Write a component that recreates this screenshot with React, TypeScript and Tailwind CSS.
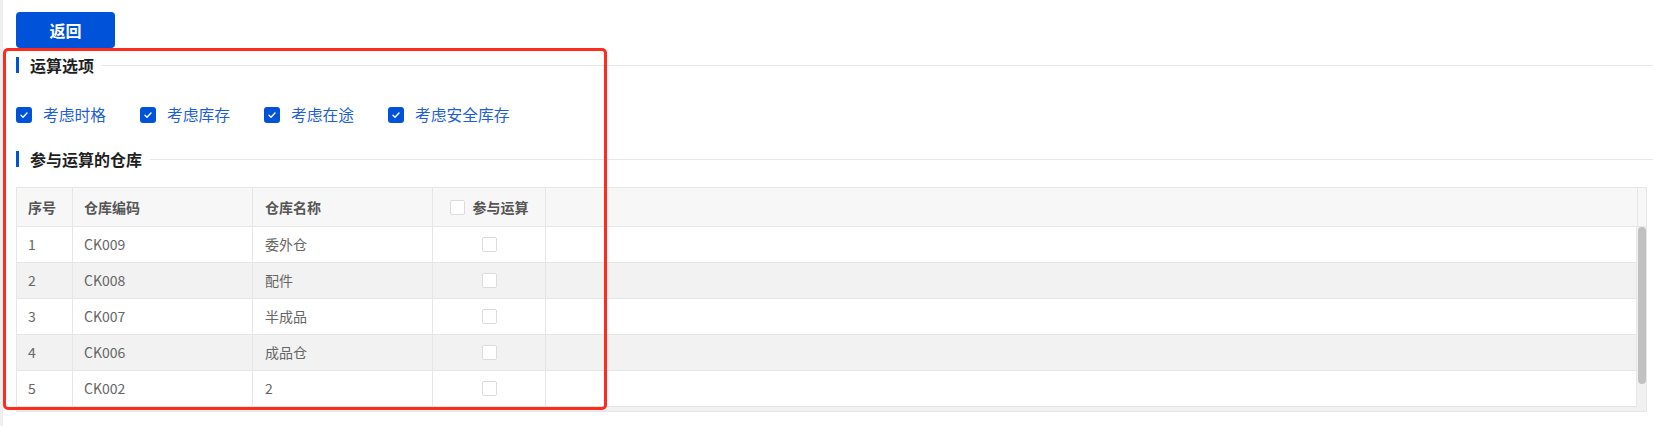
import React, { useState } from 'react';

interface Warehouse {
  no: number;
  code: string;
  name: string;
}

const warehouses: Warehouse[] = [
  { no: 1, code: 'CK009', name: '委外仓' },
  { no: 2, code: 'CK008', name: '配件' },
  { no: 3, code: 'CK007', name: '半成品' },
  { no: 4, code: 'CK006', name: '成品仓' },
  { no: 5, code: 'CK002', name: '2' },
];

const options = ['考虑时格', '考虑库存', '考虑在途', '考虑安全库存'];

// Section heading with the blue bar on the left and a line filling the rest
const SectionTitle: React.FC<{ title: string; className?: string }> = ({ title, className }) => (
  <div className={`flex items-center h-[22px] ${className ?? ''}`}>
    <span className="w-[3px] h-4 bg-[#0052d9]" />
    <span className="ml-[11px] text-[16px] font-bold text-[#1f1f1f] leading-none">{title}</span>
    <span className="flex-1 h-px bg-[#e6e6e6] ml-2" />
  </div>
);

const CheckedBox: React.FC = () => (
  <span className="w-4 h-4 rounded-[3px] bg-[#0052d9] flex items-center justify-center shrink-0">
    <svg width="12" height="12" viewBox="0 0 12 12" fill="none">
      <path d="M3 6.2l2 2 4-4.2" stroke="white" strokeWidth="1.4" strokeLinecap="round" strokeLinejoin="round" />
    </svg>
  </span>
);

const EmptyBox: React.FC = () => (
  <span className="w-[15px] h-[15px] rounded-[2px] border border-[#dcdcdc] bg-white inline-block shrink-0" />
);

const App: React.FC = () => {
  const [checked] = useState<boolean[]>([true, true, true, true]);

  return (
    <div className="relative min-h-screen bg-white border-l-[3px] border-[#efefef] pl-[13px] pt-3 font-['Noto_Sans_CJK_SC','Noto_Sans',sans-serif]">
      {/* Back button */}
      <button className="w-[99px] h-9 rounded-[4px] bg-[#0052d9] text-white text-[16px] font-bold">
        返回
      </button>

      <SectionTitle title="运算选项" className="mt-[6px]" />

      {/* Options */}
      <div className="flex items-center h-6 mt-[27px]">
        {options.map((label, i) => (
          <label key={label} className="flex items-center mr-[34px]">
            {checked[i] && <CheckedBox />}
            <span className="ml-[11px] text-[15.75px] text-[#1f5fd6] leading-none">{label}</span>
          </label>
        ))}
      </div>

      <SectionTitle title="参与运算的仓库" className="mt-[21px]" />

      {/* Warehouse table */}
      <div className="mt-[17px] mr-[6px] border border-[#e6e6e6] flex">
        <div className="flex-1">
          <div className="flex h-[39px] bg-[#f7f7f7] border-b border-[#e6e6e6] text-[14px] font-semibold text-[#555]">
            <div className="w-[56px] border-r border-[#e6e6e6] flex items-center pl-[11px]">序号</div>
            <div className="w-[180px] border-r border-[#e6e6e6] flex items-center pl-[11px]">仓库编码</div>
            <div className="w-[180px] border-r border-[#e6e6e6] flex items-center pl-3">仓库名称</div>
            <div className="w-[113px] border-r border-[#e6e6e6] flex items-center justify-center gap-2">
              <EmptyBox />
              <span>参与运算</span>
            </div>
            <div className="flex-1" />
          </div>
          {warehouses.map((w, i) => (
            <div
              key={w.code}
              className={`flex h-9 border-b border-[#e6e6e6] text-[14px] text-[#666] ${i % 2 === 1 ? 'bg-[#f2f2f2]' : 'bg-white'}`}
            >
              <div className="w-[56px] border-r border-[#e6e6e6] flex items-center pl-[11px]">{w.no}</div>
              <div className="w-[180px] border-r border-[#e6e6e6] flex items-center pl-[11px]">{w.code}</div>
              <div className="w-[180px] border-r border-[#e6e6e6] flex items-center pl-3">{w.name}</div>
              <div className="w-[113px] border-r border-[#e6e6e6] flex items-center justify-center">
                <EmptyBox />
              </div>
              <div className="flex-1 border-r border-[#e6e6e6]" />
            </div>
          ))}
          <div className="h-1 bg-[#f1f1f1]" />
        </div>
        {/* Vertical scrollbar */}
        <div className="w-[9px] flex flex-col">
          <div className="h-[39px] bg-[#f7f7f7] border-b border-l border-[#e6e6e6]" />
          <div className="flex-1 bg-[#f1f1f1] pl-px pr-0">
            <div className="h-[157px] rounded-full bg-[#c1c1c1]" />
          </div>
        </div>
      </div>

      {/* Highlight frame */}
      <div className="pointer-events-none absolute left-0 top-[48px] w-[604px] h-[362px] border-[3px] border-[#ff2b1c] rounded-[5px]" />
    </div>
  );
};

export default App;
